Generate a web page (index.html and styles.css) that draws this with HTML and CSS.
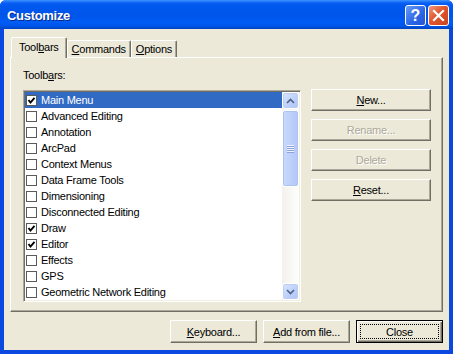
FILE: index.html
```html
<!DOCTYPE html>
<html lang="en">
    <head>
        <meta charset="UTF-8">
        <link rel="stylesheet" href="styles.css">
        <title>Customize</title>
    </head>

    <body>
    <div class="window">
        <div class="titlebar">
            <span class="title">Customize</span>
            <div class="caption-buttons">
                <span class="cap-btn help">?</span>
                <span class="cap-btn close">
                    <svg width="13" height="13" viewBox="0 0 13 13">
                        <path d="M2 2 L11 11 M11 2 L2 11" stroke="#fff" stroke-width="2.2" stroke-linecap="square"/>
                    </svg>
                </span>
            </div>
        </div>

        <div class="client">
            <div class="tabs">
                <div class="tab active">Tool<u>b</u>ars</div>
                <div class="tab"><u>C</u>ommands</div>
                <div class="tab"><u>O</u>ptions</div>
            </div>

            <div class="panel">
                <div class="label">Toolb<u>a</u>rs:</div>
                <div class="content">
                    <div class="listbox">
                        <ul class="items">
                            <li class="selected"><span class="check on"></span>Main Menu</li>
                            <li><span class="check"></span>Advanced Editing</li>
                            <li><span class="check"></span>Annotation</li>
                            <li><span class="check"></span>ArcPad</li>
                            <li><span class="check"></span>Context Menus</li>
                            <li><span class="check"></span>Data Frame Tools</li>
                            <li><span class="check"></span>Dimensioning</li>
                            <li><span class="check"></span>Disconnected Editing</li>
                            <li><span class="check on"></span>Draw</li>
                            <li><span class="check on"></span>Editor</li>
                            <li><span class="check"></span>Effects</li>
                            <li><span class="check"></span>GPS</li>
                            <li><span class="check"></span>Geometric Network Editing</li>
                        </ul>
                        <div class="scrollbar">
                            <div class="sb-btn">
                                <svg width="9" height="6" viewBox="0 0 9 6"><path d="M1 5 L4.5 1.5 L8 5" fill="none" stroke="#4d6185" stroke-width="1.6"/></svg>
                            </div>
                            <div class="thumb"><span class="grip"></span></div>
                            <div class="sb-btn">
                                <svg width="9" height="6" viewBox="0 0 9 6"><path d="M1 1 L4.5 4.5 L8 1" fill="none" stroke="#4d6185" stroke-width="1.6"/></svg>
                            </div>
                        </div>
                    </div>

                    <div class="side-buttons">
                        <button class="btn"><u>N</u>ew...</button>
                        <button class="btn" disabled>Rename...</button>
                        <button class="btn" disabled>Delete</button>
                        <button class="btn"><u>R</u>eset...</button>
                    </div>
                </div>
            </div>

            <div class="footer">
                <button class="btn wide"><u>K</u>eyboard...</button>
                <button class="btn wide"><u>A</u>dd from file...</button>
                <button class="btn wide default">Close</button>
            </div>
        </div>
    </div>
    </body>
</html>
```

FILE: styles.css
```css
* { box-sizing: border-box; }

html, body { margin: 0; }

body {
    width: 453px; height: 354px; overflow: hidden;
    font-family: "Liberation Sans", Arial, sans-serif; font-size: 11px;
    letter-spacing: -0.25px; color: #000; background: #fff;
}

.window {
    height: 354px; display: flex; flex-direction: column;
    background: #0a48e0; border-radius: 6px 6px 0 0;
    overflow: hidden;
}

/* title bar */
.titlebar {
    height: 29px; flex: none;
    display: flex; align-items: center; padding: 2px 4px 0 7px;
    background: linear-gradient(#3d95ff 0, #0a5ef3 3px, #0058ee 6px, #0055ea 16px, #005cf6 22px, #0055e8 26px, #0043c0 29px);
}

.title {
    flex: 1; color: #fff; font-weight: bold; font-size: 13px;
    letter-spacing: -0.3px; text-shadow: 1px 1px #0a2a8c;
}

.caption-buttons { display: flex; gap: 2px; }

.cap-btn {
    width: 21px; height: 21px; border: 1px solid #fff; border-radius: 3px;
    display: flex; align-items: center; justify-content: center;
}

.help {
    background: linear-gradient(135deg, #6a9cf7, #2b64e4 60%, #2257d8);
    color: #fff; font-weight: bold; font-size: 16px; letter-spacing: 0;
}

.close { background: linear-gradient(135deg, #f09a7b, #e0562e 45%, #c9441d); }

/* client area */
.client {
    flex: 1; margin: 0 4px 4px; padding: 8px 6px 0;
    background: #ece9d8; display: flex; flex-direction: column;
}

.tabs {
    height: 20px; display: flex; align-items: flex-end;
    padding-left: 1px; position: relative; z-index: 1;
}

.tab {
    height: 17px; padding: 0 4px; line-height: 16px; text-align: center;
    border: 1px solid; border-bottom: none; border-radius: 2px 2px 0 0;
    border-color: #fff #716f64 transparent #fff;
    box-shadow: inset -1px 0 #aca899;
}

.tab.active {
    height: 21px; margin-bottom: -1px; padding: 1px 7px 0;
    background: #ece9d8;
}

.panel {
    flex: 1; padding: 11px 11px 0 12px;
    border: 1px solid; border-color: #fff #716f64 #716f64 #fff;
    box-shadow: inset -1px -1px #aca899;
}

.label { line-height: 13px; margin-bottom: 8px; }

.content {
    display: grid; grid-template-columns: 278px 120px; gap: 10px;
    align-items: start;
}

/* list with checkboxes */
.listbox {
    height: 212px; display: flex; background: #fff;
    border: 1px solid; border-color: #aca899 #fff #fff #aca899;
    box-shadow: inset 1px 1px #716f64, inset -1px -1px #f1efe2;
    padding: 1px;
}

.items { flex: 1; margin: 0; padding: 0; list-style: none; }

.items li {
    height: 16px; display: flex; align-items: center; gap: 4px;
    padding-left: 1px; white-space: nowrap;
}

.items li.selected { background: #316ac5; color: #fff; }

.check {
    width: 11px; height: 11px; flex: none;
    border: 1px solid #5a5a5a; background: #fff;
}

.check.on {
    background: #fff url("data:image/svg+xml,%3Csvg xmlns='http://www.w3.org/2000/svg' width='9' height='9'%3E%3Cpath d='M1.5 4 L3.5 6.5 L7.5 1.8' fill='none' stroke='%23000' stroke-width='1.9'/%3E%3C/svg%3E") center no-repeat;
}

.scrollbar {
    width: 17px; display: flex; flex-direction: column;
    background: linear-gradient(to right, #f3f1ec, #fefefd);
}

.sb-btn {
    height: 17px; flex: none;
    display: flex; align-items: center; justify-content: center;
    border: 1px solid #fff; border-radius: 3px;
    background: linear-gradient(135deg, #dbe6fd, #bccffa 60%, #b0c4f5);
    box-shadow: inset 0 0 0 1px #bccdf4;
}

.sb-btn:last-child { margin-top: auto; }

.thumb {
    height: 77px; margin-top: 1px;
    display: flex; align-items: center; justify-content: center;
    border: 1px solid #fff; border-radius: 3px;
    background: linear-gradient(to right, #c9d8fd, #bccefa 60%, #b3c6f6);
    box-shadow: inset 0 0 0 1px #adc1f2;
}

.grip {
    width: 7px; height: 8px;
    background: repeating-linear-gradient(#eef3ff 0 1px, #8ca3d9 1px 2px);
}

/* buttons */
.side-buttons {
    display: flex; flex-direction: column; gap: 8px; margin-top: -1px;
}

.btn {
    height: 22px; padding: 0; background: #ece9d8;
    font: inherit; letter-spacing: inherit; color: #000; text-align: center;
    border: 1px solid; border-color: #fff #716f64 #716f64 #fff;
    box-shadow: inset -1px -1px #aca899;
}

.btn:disabled { color: #aca899; text-shadow: 1px 1px #fff; }

.footer {
    display: flex; justify-content: flex-end; gap: 6px;
    margin: 8px 0 7px;
}

.btn.wide { width: 87px; height: 23px; }

.btn.default {
    border-color: #000;
    box-shadow: inset 1px 1px #fff, inset -1px -1px #716f64, inset -2px -2px #aca899;
    outline: 1px dotted #000; outline-offset: -5px;
}
```
